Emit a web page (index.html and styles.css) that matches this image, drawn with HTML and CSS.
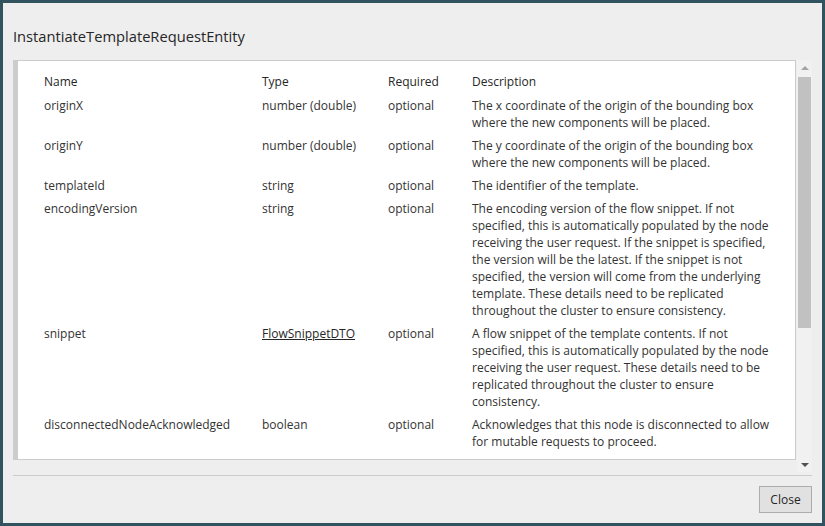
FILE: index.html
```
<!DOCTYPE html>
<html>
<head>
<meta charset="utf-8">
<link rel="stylesheet" href="styles.css">
</head>
<body>
<div class="dialog">
  <div class="dialog-title">InstantiateTemplateRequestEntity</div>
  <div class="dialog-body">
    <div class="panel">
      <table class="props">
        <colgroup>
          <col class="c-name"><col class="c-type"><col class="c-req"><col class="c-desc">
        </colgroup>
        <thead>
          <tr><th>Name</th><th>Type</th><th>Required</th><th>Description</th></tr>
        </thead>
        <tbody>
          <tr><td>originX</td><td>number (double)</td><td>optional</td><td>The x coordinate of the origin of the bounding box where the new components will be placed.</td></tr>
          <tr><td>originY</td><td>number (double)</td><td>optional</td><td>The y coordinate of the origin of the bounding box where the new components will be placed.</td></tr>
          <tr><td>templateId</td><td>string</td><td>optional</td><td>The identifier of the template.</td></tr>
          <tr><td>encodingVersion</td><td>string</td><td>optional</td><td>The encoding version of the flow snippet. If not specified, this is automatically populated by the node receiving the user request. If the snippet is specified, the version will be the latest. If the snippet is not specified, the version will come from the underlying template. These details need to be replicated throughout the cluster to ensure consistency.</td></tr>
          <tr><td>snippet</td><td><a href="#" class="type-link">FlowSnippetDTO</a></td><td>optional</td><td>A flow snippet of the template contents. If not specified, this is automatically populated by the node receiving the user request. These details need to be replicated throughout the cluster to ensure consistency.</td></tr>
          <tr><td>disconnectedNodeAcknowledged</td><td>boolean</td><td>optional</td><td>Acknowledges that this node is disconnected to allow for mutable requests to proceed.</td></tr>
        </tbody>
      </table>
    </div>
    <div class="scrollbar">
      <div class="sb-btn"><span class="arrow-up"></span></div>
      <div class="sb-track"><div class="sb-thumb"></div></div>
      <div class="sb-btn"><span class="arrow-down"></span></div>
    </div>
  </div>
  <div class="dialog-footer">
    <button class="btn">Close</button>
  </div>
</div>
</body>
</html>
```
FILE: styles.css
```
* { box-sizing: border-box; }
html, body { margin: 0; padding: 0; }
body {
  width: 825px;
  height: 526px;
  background: #30535f;
  padding: 3px;
  font-family: "Open Sans", "DejaVu Sans", sans-serif;
  overflow: hidden;
}
.dialog {
  width: 819px;
  height: 520px;
  background: #eeeeee;
  display: flex;
  flex-direction: column;
  padding: 0 10px;
}
.dialog-title {
  font-size: 14.7px;
  line-height: 20px;
  color: #262626;
  padding-top: 23px;
  height: 57px;
}
.dialog-body {
  display: flex;
  gap: 1px;
  height: 412px;
}
.panel {
  width: 783px;
  height: 400px;
  background: #ffffff;
  border: 1px solid #cccccc;
  border-left: 5px solid #cccccc;
  overflow: hidden;
  padding: 9px 0 0 20px;
}
.props {
  border-collapse: collapse;
  table-layout: fixed;
  font-size: 12px;
  line-height: 17px;
  color: #333333;
}
.c-name { width: 218px; }
.c-type { width: 126px; }
.c-req { width: 84px; }
.c-desc { width: 318px; }
.props th, .props td {
  text-align: left;
  vertical-align: top;
  font-weight: normal;
  padding: 3px 6px;
}
.props th { color: #262626; padding-bottom: 4px; }
.type-link { color: #262626; text-decoration: underline; }
.scrollbar {
  width: 15px;
  height: 412px;
  background: #f1f1f1;
  display: flex;
  flex-direction: column;
}
.sb-btn {
  height: 15px;
  display: flex;
  align-items: center;
  justify-content: center;
}
.arrow-up {
  width: 0; height: 0;
  border-left: 4px solid transparent;
  border-right: 4px solid transparent;
  border-bottom: 4px solid #a3a3a3;
}
.arrow-down {
  width: 0; height: 0;
  border-left: 4px solid transparent;
  border-right: 4px solid transparent;
  border-top: 4px solid #505050;
}
.sb-track {
  flex: 1;
  padding: 2px 1px;
}
.sb-thumb {
  height: 251px;
  background: #c1c1c1;
}
.dialog-footer {
  margin-top: 3px;
  border-top: 1px solid #cccccc;
  display: flex;
  justify-content: flex-end;
  padding-top: 10px;
}
.btn {
  width: 53px;
  height: 27px;
  background: #e1e1e1;
  border: 1px solid #adadad;
  font-family: "Open Sans", "DejaVu Sans", sans-serif;
  font-size: 12px;
  color: #262626;
  padding: 0;
}
```
